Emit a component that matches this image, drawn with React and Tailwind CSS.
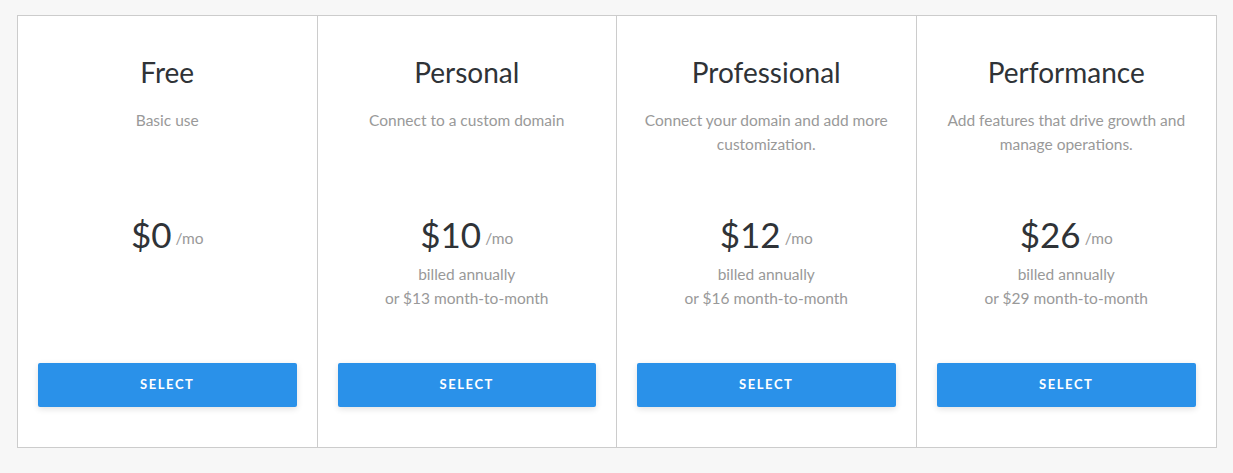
import React from "react";

const plans = [
  { name: "Free", desc: ["Basic use"], price: "$0", billed: null },
  {
    name: "Personal",
    desc: ["Connect to a custom domain"],
    price: "$10",
    billed: ["billed annually", "or $13 month-to-month"],
  },
  {
    name: "Professional",
    desc: ["Connect your domain and add more", "customization."],
    price: "$12",
    billed: ["billed annually", "or $16 month-to-month"],
  },
  {
    name: "Performance",
    desc: ["Add features that drive growth and", "manage operations."],
    price: "$26",
    billed: ["billed annually", "or $29 month-to-month"],
  },
];

const Plan = (props) => {
  return (
    <section className="flex flex-col items-center px-5 pt-[38px] pb-10 border-r border-[#cccccc] last:border-r-0">
      <h2 className="text-[28px] leading-[36px] text-[#2f3337]">{props.name}</h2>
      <div className="mt-[18px] h-[48px] text-[15.5px] leading-[24px] text-[#999999] text-center">
        {props.desc.map((d) => (
          <div key={d}>{d}</div>
        ))}
      </div>
      <div className="mt-[54px] h-[100px] flex flex-col items-center">
        <div className="h-[48px] flex items-center">
          <span className="text-[35px] text-[#2f3337]">{props.price}</span>
          <span className="ml-1 mt-[10px] text-[15.5px] text-[#999999]">/mo</span>
        </div>
        {props.billed && (
          <div className="mt-1 text-[15.5px] leading-[24px] text-[#999999] text-center">
            {props.billed.map((b) => (
              <div key={b}>{b}</div>
            ))}
          </div>
        )}
      </div>
      <button className="mt-[53px] w-full h-[44px] rounded-[2px] bg-[#2a91e9] text-white text-[13px] font-bold tracking-[0.12em] shadow-[0_2px_6px_rgba(0,0,0,0.12)]">
        SELECT
      </button>
    </section>
  );
};

export default function App() {
  return (
    <div
      className="min-h-[473px] bg-[#f7f7f7] pt-[15px] pl-[17px]"
      style={{ fontFamily: "Lato, 'Noto Sans', sans-serif" }}
    >
      <div className="w-[1200px] grid grid-cols-4 bg-white border border-[#cccccc]">
        {plans.map((p) => (
          <Plan key={p.name} {...p} />
        ))}
      </div>
    </div>
  );
}
